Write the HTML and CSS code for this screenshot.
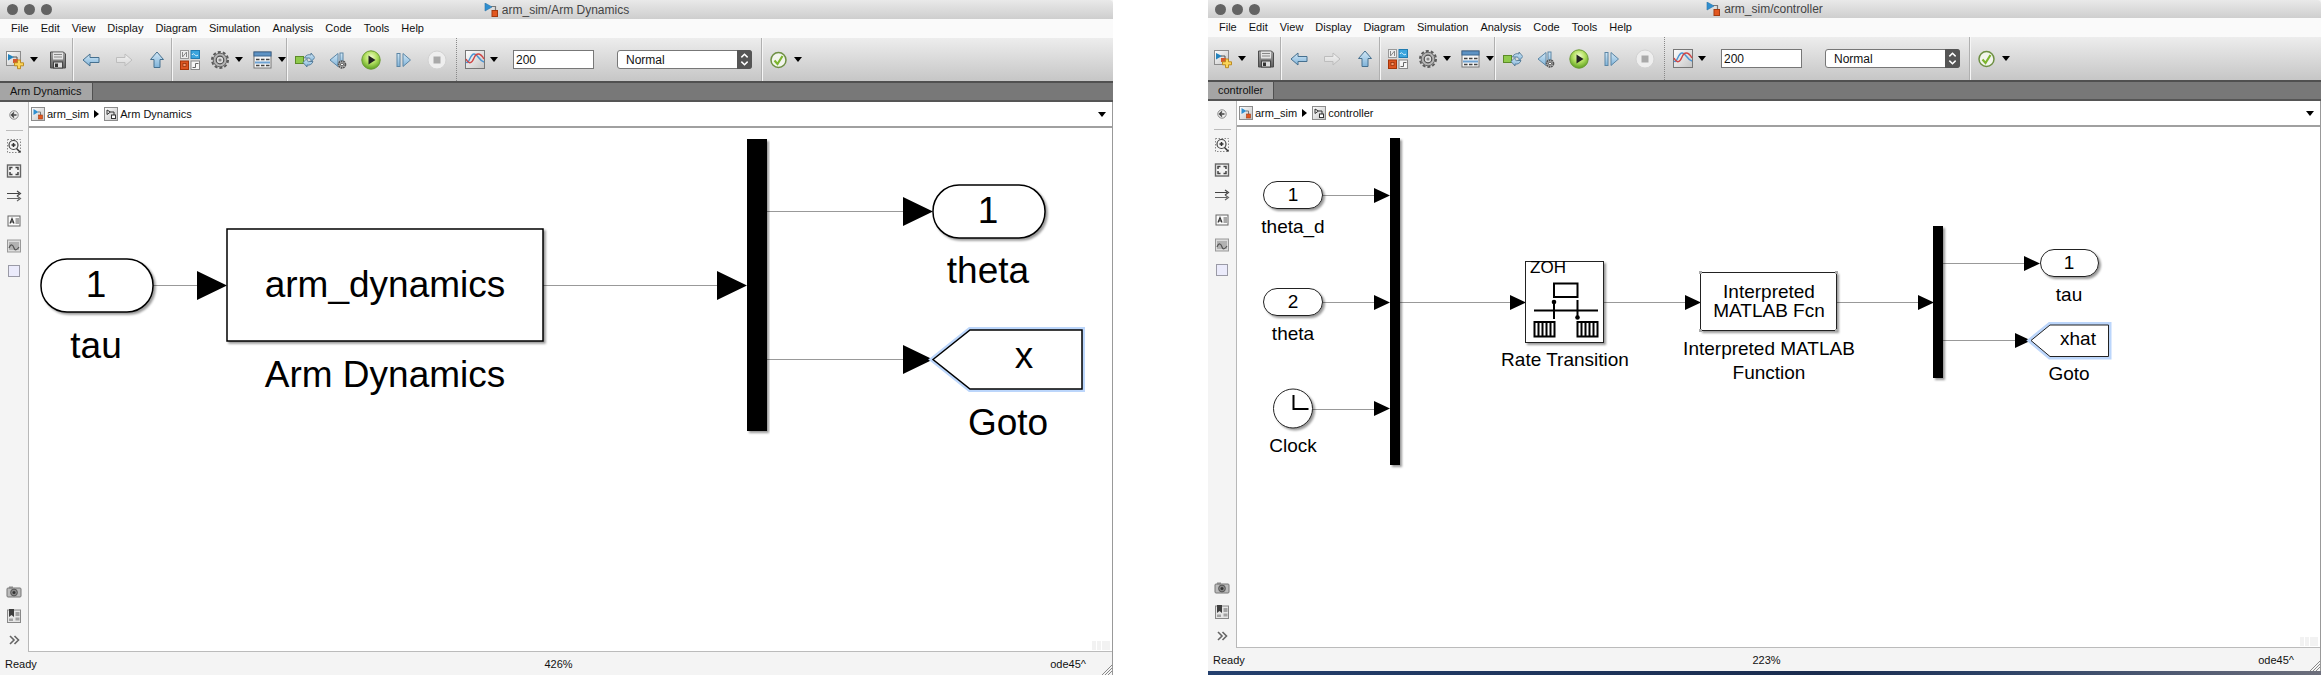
FILE: index.html
```html
<!DOCTYPE html>
<html lang="en">
<head>
<meta charset="utf-8">
<title>arm_sim</title>
<link rel="stylesheet" href="styles.css">
</head>
<body>
<svg class="defs" aria-hidden="true">
  <defs>
    <linearGradient id="blue" x1="0" y1="0" x2="0" y2="1"><stop offset="0" stop-color="#d3e8f6"/><stop offset="1" stop-color="#7fb3d9"/></linearGradient>
    <linearGradient id="pale" x1="0" y1="0" x2="0" y2="1"><stop offset="0" stop-color="#f4f4f4"/><stop offset="1" stop-color="#d6d6d6"/></linearGradient>
    <linearGradient id="grey" x1="0" y1="0" x2="0" y2="1"><stop offset="0" stop-color="#a8a8a8"/><stop offset="1" stop-color="#5e5e5e"/></linearGradient>
    <linearGradient id="tile" x1="0" y1="0" x2="1" y2="1"><stop offset="0" stop-color="#fff"/><stop offset="1" stop-color="#c4c4c4"/></linearGradient>
    <radialGradient id="green" cx=".5" cy=".35" r=".65"><stop offset="0" stop-color="#f4ffd0"/><stop offset=".5" stop-color="#b3e061"/><stop offset="1" stop-color="#5da020"/></radialGradient>
    <filter id="shadow" x="-10%" y="-10%" width="125%" height="130%"><feDropShadow dx="2" dy="2" stdDeviation="1" flood-color="#000" flood-opacity=".4"/></filter>
  </defs>
  <symbol id="i-model" viewBox="0 0 14 14"><path d="M7 3.500h4.500V8" fill="none" stroke="#777" stroke-width="1.200"/><path d="M1 0l7 4-7 4z" fill="#2f8fd0" stroke="#2a74a8" stroke-width=".6"/><rect x="8" y="7.500" width="5.500" height="6" fill="#e2571f" stroke="#a33a10"/></symbol>
  <symbol id="i-root" viewBox="0 0 14 14"><rect x=".5" y=".5" width="13" height="13" fill="url(#tile)" stroke="#8c8c8c"/><path d="M2.500 2l5 3-5 3z" fill="#2f8fd0"/><path d="M7 5h2.500v3" fill="none" stroke="#777"/><rect x="7.500" y="8" width="4" height="4" fill="#e2571f" stroke="#a33a10" stroke-width=".6"/></symbol>
  <symbol id="i-sub" viewBox="0 0 14 14"><rect x=".5" y=".5" width="13" height="13" fill="url(#tile)" stroke="#8c8c8c"/><path d="M3 3l3.500 2L3 7.500zM6.500 5h3.500v3" fill="none" stroke="#333"/><rect x="7.500" y="8" width="4" height="3.500" fill="#fff" stroke="#333"/></symbol>
  <symbol id="i-new" viewBox="0 0 20 20"><rect x="1.500" y="1.500" width="14" height="14" fill="url(#tile)" stroke="#8c8c8c"/><path d="M3 4l6 3-6 3.500z" fill="#2583bd"/><path d="M8 7h4v4" fill="none" stroke="#555"/><rect x="8" y="9" width="5" height="4" fill="#d65a2c"/><path d="M12.500 10h3v2.800h3v3h-3v2.900h-3v-2.900h-3v-3h3z" fill="#fbd65a" stroke="#b98518" stroke-width=".9"/></symbol>
  <symbol id="i-save" viewBox="0 0 20 20"><path d="M2.500 2h13l2 2v14h-15z" fill="url(#grey)" stroke="#4c4c4c"/><rect x="5" y="2.500" width="10" height="7" fill="#e4e4e4"/><path d="M6 4.500h8M6 7h8" stroke="#888"/><rect x="5.500" y="12" width="9" height="6" fill="#ddd" stroke="#444"/><rect x="7" y="13.500" width="3" height="3.500" fill="#333"/></symbol>
  <symbol id="i-back" viewBox="0 0 20 20"><path d="M2 10l7-6v3.500h9v5H9V16z" fill="url(#blue)" stroke="#46708f" stroke-linejoin="round"/></symbol>
  <symbol id="i-fwd" viewBox="0 0 20 20"><path d="M18 10l-7-6v3.500H2.500v5H11V16z" fill="url(#pale)" stroke="#bdbdbd" stroke-linejoin="round"/></symbol>
  <symbol id="i-up" viewBox="0 0 20 20"><path d="M10 2l6.500 7.500H13V17.500H7V9.500H3.500z" fill="url(#blue)" stroke="#46708f" stroke-linejoin="round"/></symbol>
  <symbol id="i-lib" viewBox="0 0 20 20"><rect x=".5" y=".5" width="8" height="8" fill="#eee" stroke="#999"/><path d="M2.500 2v5l4-5v5" fill="none" stroke="#888"/><rect x="11" y=".5" width="8.500" height="8" fill="#3aa5de" stroke="#217bb0"/><path d="M12 5c2-4 3 3 6 0" fill="none" stroke="#d8f0fc"/><rect x=".5" y="11" width="8" height="8.500" fill="#dc5420" stroke="#a43508"/><rect x="3" y="13.500" width="3" height="3" fill="#f49a70" stroke="#8c2b05" stroke-width=".7"/><rect x="11" y="11" width="8.500" height="8.500" fill="#f6f6f6" stroke="#888"/><path d="M12.500 17.500h3v-4h3" fill="none" stroke="#666"/></symbol>
  <symbol id="i-gear" viewBox="0 0 20 20"><circle cx="10" cy="10" r="8" fill="none" stroke="#5a5a5a" stroke-width="2" stroke-dasharray="3 2.030"/><circle cx="10" cy="10" r="6.800" fill="#b4b4b4" stroke="#666"/><circle cx="10" cy="10" r="3.800" fill="#ddd" stroke="#4f4f4f" stroke-width="1.200"/><circle cx="10" cy="10" r="1.600" fill="#888"/></symbol>
  <symbol id="i-table" viewBox="0 0 20 20"><rect x="1" y="2" width="17" height="16" fill="#f4f4f4" stroke="#777"/><rect x="1" y="2" width="17" height="4" fill="#5e93c4" stroke="#3d6690"/><path d="M3 9.500h3.500m1.500 0h3.500m1.500 0h3.500M3 15.500h3.500m1.500 0h3.500m1.500 0h3.500" stroke="#444" stroke-width="1.500"/><path d="M2 12.500h15" stroke="#6ea2d2" stroke-width="2"/></symbol>
  <symbol id="i-build" viewBox="0 0 20 20"><rect x=".5" y="6.500" width="8" height="7" fill="#8fca4c" stroke="#5c8b28"/><path d="M9.500 8A5 5 0 0 1 16 5V3l3.800 4.500L16 12v-1.500A2.500 2.500 0 0 0 13 8z" fill="url(#blue)" stroke="#46708f" stroke-width=".8"/><path d="M18 11.500A5 5 0 0 1 12 15v2L8 12.500 12 8.500V10.500a2.500 2.500 0 0 0 3 1z" fill="url(#blue)" stroke="#46708f" stroke-width=".8"/></symbol>
  <symbol id="i-stepback" viewBox="0 0 20 20"><path d="M10 3.500v13L2 10z" fill="url(#blue)" stroke="#5c86a5"/><rect x="12" y="3" width="3" height="12" fill="url(#blue)" stroke="#5c86a5"/><circle cx="14" cy="14.500" r="3.400" fill="#ccc" stroke="#555" stroke-width="1.800" stroke-dasharray="1.800 .6"/><circle cx="14" cy="14.500" r="1.500" fill="#fff" stroke="#444"/></symbol>
  <symbol id="i-play" viewBox="0 0 20 20"><circle cx="10" cy="10" r="9.200" fill="url(#green)" stroke="#6b9c34"/><path d="M7.500 5.500v9l7-4.500z" fill="#222"/></symbol>
  <symbol id="i-step" viewBox="0 0 20 20"><rect x="3" y="3.500" width="3" height="13" fill="url(#blue)" stroke="#5c86a5"/><path d="M9 3.500v13L16.500 10z" fill="url(#blue)" stroke="#5c86a5"/></symbol>
  <symbol id="i-stop" viewBox="0 0 20 20"><circle cx="10" cy="10" r="9" fill="#eee" stroke="#d2d2d2"/><rect x="6.500" y="6.500" width="7" height="7" fill="#a9a9a9"/></symbol>
  <symbol id="i-scope" viewBox="0 0 20 20"><rect x=".5" y=".5" width="19" height="18" fill="url(#tile)" stroke="#777"/><path d="M1 12C4 15 5 4 9 4s5 7 10 8" fill="none" stroke="#4a94d4" stroke-width="1.400"/><path d="M1 9c3 6 6 4 8-1s6-6 10 1" fill="none" stroke="#cf4545" stroke-width="1.400"/></symbol>
  <symbol id="i-check" viewBox="0 0 20 20"><circle cx="9.500" cy="10" r="7.500" fill="#f2f5ec" stroke="#6d8f42" stroke-width="1.500"/><path d="M5.500 10.500l3 3.500 5-8" fill="none" stroke="#7cb52e" stroke-width="2.200"/></symbol>
  <symbol id="i-down" viewBox="0 0 8 5"><path d="M0 0h8L4 5z"/></symbol>
  <symbol id="i-collapse" viewBox="0 0 16 16"><circle cx="8" cy="8" r="4.200" fill="#eee" stroke="#8a8a8a"/><path d="M10.500 8H6M8 5.500L5.500 8 8 10.500" fill="none" stroke="#444" stroke-width="1.300"/></symbol>
  <symbol id="i-zoom" viewBox="0 0 16 16"><path d="M1.500 1.500h13v13h-13z" fill="none" stroke="#888" stroke-dasharray="1.500 1.500"/><circle cx="7.500" cy="7" r="4.500" fill="#f4f4f4" stroke="#444" stroke-width="1.200"/><path d="M5.500 7h4M7.500 5v4M10.500 10.500l4 4" stroke="#333" stroke-width="1.500"/></symbol>
  <symbol id="i-fit" viewBox="0 0 16 16"><rect x="1.500" y="2" width="13" height="12" fill="#f3f3f3" stroke="#666" stroke-width="1.400"/><path d="M4 7V4.500h2.500M9.500 4.500H12V7M12 9v2.500H9.500M6.500 11.500H4V9" fill="none" stroke="#444" stroke-width="1.500"/></symbol>
  <symbol id="i-arrows" viewBox="0 0 16 16"><path d="M1 5.500h12M11 3l3.500 2.500L11 8" fill="none" stroke="#444" stroke-width="1.200"/><path d="M1 10.500h12M11 8l3.500 2.500L11 13" fill="none" stroke="#666" stroke-width="1.200"/></symbol>
  <symbol id="i-note" viewBox="0 0 16 16"><rect x="2" y="3" width="12" height="10" fill="#fafafa" stroke="#666"/><path d="M4 10.500l2-5 2 5M4.700 9h2.600" fill="none" stroke="#333" stroke-width="1.200"/><path d="M9.500 6H13M9.500 8H13M9.500 10H13" stroke="#555"/></symbol>
  <symbol id="i-image" viewBox="0 0 16 16"><rect x="1.500" y="2" width="13" height="12" fill="#ddd" stroke="#999"/><rect x="3" y="4" width="10" height="8" fill="#b2b2b2"/><path d="M3 10c2-5 4-3 5 0s3 2 5-1" fill="none" stroke="#555" stroke-width="1.200"/></symbol>
  <symbol id="i-area" viewBox="0 0 16 16"><rect x="2.500" y="2.500" width="11" height="11" fill="#ebebfb" stroke="#9a9aa6"/></symbol>
  <symbol id="i-camera" viewBox="0 0 16 16"><rect x="1" y="4" width="14" height="9" rx="1" fill="#bbb" stroke="#777"/><rect x="3" y="2.500" width="4" height="2" fill="#888"/><circle cx="8" cy="8.500" r="3.400" fill="#888" stroke="#555"/><circle cx="8" cy="8.500" r="1.500" fill="#333"/></symbol>
  <symbol id="i-book" viewBox="0 0 16 16"><rect x="1.500" y="2" width="13" height="12.500" fill="#e6e6e6" stroke="#888"/><path d="M9.500 4h4v4h-4zM9.500 9.500h4v3h-4zM3 10.500h4v2.500H3z" fill="#a3a3a3"/><path d="M3 1h5v8L5.500 7 3 9z" fill="#3e3e3e"/></symbol>
  <symbol id="i-more" viewBox="0 0 16 16"><path d="M4 4l4 4-4 4M8.500 4l4 4-4 4" fill="none" stroke="#666" stroke-width="1.600"/></symbol>
</svg>

<main class="desktop">
  <section class="window">
    <header class="title">
      <span class="lights"><i></i><i></i><i></i></span>
      <span class="title-text"><svg class="ico-s"><use href="#i-model"/></svg>arm_sim/Arm Dynamics</span>
    </header>
    <nav class="menu">
      <button>File</button><button>Edit</button><button>View</button><button>Display</button><button>Diagram</button><button>Simulation</button><button>Analysis</button><button>Code</button><button>Tools</button><button>Help</button>
    </nav>
    <div class="toolbar">
      <div class="group first">
        <button class="split" aria-label="New"><svg class="ico"><use href="#i-new"/></svg><svg class="down"><use href="#i-down"/></svg></button>
        <button aria-label="Save"><svg class="ico"><use href="#i-save"/></svg></button>
      </div>
      <div class="group wide">
        <button aria-label="Back"><svg class="ico"><use href="#i-back"/></svg></button>
        <button aria-label="Forward"><svg class="ico"><use href="#i-fwd"/></svg></button>
        <button aria-label="Up"><svg class="ico"><use href="#i-up"/></svg></button>
      </div>
      <div class="group tight">
        <button aria-label="Library"><svg class="ico"><use href="#i-lib"/></svg></button>
        <button class="split" aria-label="Settings"><svg class="ico"><use href="#i-gear"/></svg><svg class="down"><use href="#i-down"/></svg></button>
        <button class="split" aria-label="Explorer"><svg class="ico"><use href="#i-table"/></svg><svg class="down"><use href="#i-down"/></svg></button>
      </div>
      <div class="group wide run">
        <button aria-label="Build"><svg class="ico"><use href="#i-build"/></svg></button>
        <button aria-label="Step back"><svg class="ico"><use href="#i-stepback"/></svg></button>
        <button aria-label="Run"><svg class="ico"><use href="#i-play"/></svg></button>
        <button aria-label="Step forward"><svg class="ico"><use href="#i-step"/></svg></button>
        <button aria-label="Stop"><svg class="ico"><use href="#i-stop"/></svg></button>
      </div>
      <div class="group fields">
        <button class="split" aria-label="Scope"><svg class="ico"><use href="#i-scope"/></svg><svg class="down"><use href="#i-down"/></svg></button>
        <input class="time" type="text" value="200" aria-label="Stop time">
        <span class="picker"><select aria-label="Simulation mode"><option>Normal</option></select><svg class="stepper" viewBox="0 0 14 18"><path d="M4 7l3-3 3 3M4 11l3 3 3-3" fill="none" stroke="#fff" stroke-width="1.400"/></svg></span>
      </div>
      <div class="group last">
        <button class="split" aria-label="Check"><svg class="ico"><use href="#i-check"/></svg><svg class="down"><use href="#i-down"/></svg></button>
      </div>
    </div>
    <div class="tabs"><button class="tab">Arm Dynamics</button></div>
    <div class="body">
      <aside class="side">
        <button aria-label="Hide browser"><svg><use href="#i-collapse"/></svg></button>
        <hr>
        <button aria-label="Zoom"><svg><use href="#i-zoom"/></svg></button>
        <button aria-label="Fit"><svg><use href="#i-fit"/></svg></button>
        <button aria-label="Sample time"><svg><use href="#i-arrows"/></svg></button>
        <button aria-label="Annotation"><svg><use href="#i-note"/></svg></button>
        <button aria-label="Image"><svg><use href="#i-image"/></svg></button>
        <button aria-label="Area"><svg><use href="#i-area"/></svg></button>
        <span class="spacer"></span>
        <button class="low" aria-label="Screenshot"><svg><use href="#i-camera"/></svg></button>
        <button class="low" aria-label="Viewmarks"><svg><use href="#i-book"/></svg></button>
        <button class="low" aria-label="More"><svg><use href="#i-more"/></svg></button>
      </aside>
      <div class="editor">
        <div class="crumbs">
          <a href="#root"><svg class="ico-s"><use href="#i-root"/></svg>arm_sim</a>
          <svg class="next" viewBox="0 0 5 8"><path d="M0 0l5 4-5 4z"/></svg>
          <a href="#sub"><svg class="ico-s"><use href="#i-sub"/></svg>Arm Dynamics</a>
          <button class="history" aria-label="History"><svg class="down"><use href="#i-down"/></svg></button>
        </div>
        <div class="canvas">
          <svg class="diagram big" role="img" aria-label="Arm Dynamics diagram">
            <g transform="translate(-29 -128)">
              <g class="wire"><path d="M153 285.500H200M543 285.500H720M767 211.500H906M767 359.500H906"/></g>
              <path d="M197 271v29l30-14.500zM717 271v29l30-14.500zM903 197v29l30-14.500zM903 345v29l30-14.500z"/>
              <g class="block" filter="url(#shadow)">
                <rect x="41" y="259" width="112" height="53" rx="26"/>
                <rect x="227" y="229" width="316" height="112"/>
                <rect x="933" y="185" width="112" height="53" rx="26"/>
              </g>
              <rect x="747" y="139" width="20" height="292" filter="url(#shadow)"/>
              <path class="halo" d="M933 359.500L970 330h112v59H970z"/>
              <path class="block" d="M933 359.500L970 330h112v59H970z"/>
              <text x="96" y="297">1</text><text x="96" y="358">tau</text>
              <text x="385" y="297">arm_dynamics</text><text x="385" y="387">Arm Dynamics</text>
              <text x="988" y="223">1</text><text x="988" y="283">theta</text>
              <text x="1024" y="368">x</text><text x="1008" y="435">Goto</text>
            </g>
          </svg>
          <span class="ghost"><i></i><i></i><i></i></span>
        </div>
      </div>
    </div>
    <footer class="status"><span>Ready</span><span>426%</span><span class="solver">ode45^</span><svg class="grip" viewBox="0 0 10 10"><path d="M0 10L10 0M3 10l7-7M6 10l4-4" stroke="#888"/></svg></footer>
  </section>

  <section class="window second">
    <header class="title">
      <span class="lights"><i></i><i></i><i></i></span>
      <span class="title-text"><svg class="ico-s"><use href="#i-model"/></svg>arm_sim/controller</span>
    </header>
    <nav class="menu">
      <button>File</button><button>Edit</button><button>View</button><button>Display</button><button>Diagram</button><button>Simulation</button><button>Analysis</button><button>Code</button><button>Tools</button><button>Help</button>
    </nav>
    <div class="toolbar">
      <div class="group first">
        <button class="split" aria-label="New"><svg class="ico"><use href="#i-new"/></svg><svg class="down"><use href="#i-down"/></svg></button>
        <button aria-label="Save"><svg class="ico"><use href="#i-save"/></svg></button>
      </div>
      <div class="group wide">
        <button aria-label="Back"><svg class="ico"><use href="#i-back"/></svg></button>
        <button aria-label="Forward"><svg class="ico"><use href="#i-fwd"/></svg></button>
        <button aria-label="Up"><svg class="ico"><use href="#i-up"/></svg></button>
      </div>
      <div class="group tight">
        <button aria-label="Library"><svg class="ico"><use href="#i-lib"/></svg></button>
        <button class="split" aria-label="Settings"><svg class="ico"><use href="#i-gear"/></svg><svg class="down"><use href="#i-down"/></svg></button>
        <button class="split" aria-label="Explorer"><svg class="ico"><use href="#i-table"/></svg><svg class="down"><use href="#i-down"/></svg></button>
      </div>
      <div class="group wide run">
        <button aria-label="Build"><svg class="ico"><use href="#i-build"/></svg></button>
        <button aria-label="Step back"><svg class="ico"><use href="#i-stepback"/></svg></button>
        <button aria-label="Run"><svg class="ico"><use href="#i-play"/></svg></button>
        <button aria-label="Step forward"><svg class="ico"><use href="#i-step"/></svg></button>
        <button aria-label="Stop"><svg class="ico"><use href="#i-stop"/></svg></button>
      </div>
      <div class="group fields">
        <button class="split" aria-label="Scope"><svg class="ico"><use href="#i-scope"/></svg><svg class="down"><use href="#i-down"/></svg></button>
        <input class="time" type="text" value="200" aria-label="Stop time">
        <span class="picker"><select aria-label="Simulation mode"><option>Normal</option></select><svg class="stepper" viewBox="0 0 14 18"><path d="M4 7l3-3 3 3M4 11l3 3 3-3" fill="none" stroke="#fff" stroke-width="1.400"/></svg></span>
      </div>
      <div class="group last">
        <button class="split" aria-label="Check"><svg class="ico"><use href="#i-check"/></svg><svg class="down"><use href="#i-down"/></svg></button>
      </div>
    </div>
    <div class="tabs"><button class="tab">controller</button></div>
    <div class="body">
      <aside class="side">
        <button aria-label="Hide browser"><svg><use href="#i-collapse"/></svg></button>
        <hr>
        <button aria-label="Zoom"><svg><use href="#i-zoom"/></svg></button>
        <button aria-label="Fit"><svg><use href="#i-fit"/></svg></button>
        <button aria-label="Sample time"><svg><use href="#i-arrows"/></svg></button>
        <button aria-label="Annotation"><svg><use href="#i-note"/></svg></button>
        <button aria-label="Image"><svg><use href="#i-image"/></svg></button>
        <button aria-label="Area"><svg><use href="#i-area"/></svg></button>
        <span class="spacer"></span>
        <button class="low" aria-label="Screenshot"><svg><use href="#i-camera"/></svg></button>
        <button class="low" aria-label="Viewmarks"><svg><use href="#i-book"/></svg></button>
        <button class="low" aria-label="More"><svg><use href="#i-more"/></svg></button>
      </aside>
      <div class="editor">
        <div class="crumbs">
          <a href="#root"><svg class="ico-s"><use href="#i-root"/></svg>arm_sim</a>
          <svg class="next" viewBox="0 0 5 8"><path d="M0 0l5 4-5 4z"/></svg>
          <a href="#sub"><svg class="ico-s"><use href="#i-sub"/></svg>controller</a>
          <button class="history" aria-label="History"><svg class="down"><use href="#i-down"/></svg></button>
        </div>
        <div class="canvas">
          <svg class="diagram small" role="img" aria-label="controller diagram">
            <g transform="translate(-1237 -127)">
              <g class="wire"><path d="M1323 195.500h55M1323 302.500h55M1313 409.500h65M1400 302.500h115M1604 302.500h85M1837 302.500h85M1943 263.500h85M1943 340.500h75"/></g>
              <path d="M1374 188v15l16-7.500zM1374 295v15l16-7.500zM1374 401v15l16-7.500zM1510 295v15l16-7.500zM1685 295v15l16-7.500zM1918 295v15l16-7.500zM2024 256v15l16-7.500zM2015 333v15l16-7.500z"/>
              <g class="block" filter="url(#shadow)">
                <rect x="1263.500" y="181.500" width="59" height="27" rx="13.500"/>
                <rect x="1263.500" y="288.500" width="59" height="27" rx="13.500"/>
                <circle cx="1293" cy="408.500" r="19.500"/>
                <rect x="1525.500" y="261.500" width="78" height="81"/>
                <rect x="1700.500" y="272.500" width="136" height="58"/>
                <rect x="2040.500" y="249.500" width="58" height="27" rx="13.500"/>
              </g>
              <g filter="url(#shadow)"><rect x="1390" y="138" width="10" height="327"/><rect x="1933" y="226" width="10" height="152"/></g>
              <path class="corner" d="M1699 271h3v3h-3zM1835 271h3v3h-3zM1699 329h3v3h-3zM1835 329h3v3h-3z"/>
              <path class="halo" d="M2031 340.500l19-15.500h58.500v31.500H2050z"/>
              <path class="block" d="M2031 340.500l19-15.500h58.500v31.500H2050z"/>
              <path class="glyph" d="M1293.500 395v14h15M1554 283.500h23.500V297H1554zM1534 310.500h64M1554 302v17M1577.500 300v17"/>
              <path class="glyph" d="M1534.500 322h20v14.500h-20zM1577.500 322h20v14.500h-20zM1538.500 322v14M1542.500 322v14M1546.500 322v14M1550.500 322v14M1581.500 322v14M1585.500 322v14M1589.500 322v14M1593.500 322v14"/>
              <circle cx="1554" cy="302" r="2.300"/><circle cx="1577.500" cy="317.500" r="2.300"/>
              <text x="1293" y="201">1</text><text x="1293" y="233">theta_d</text>
              <text x="1293" y="308">2</text><text x="1293" y="340">theta</text>
              <text x="1293" y="452">Clock</text>
              <text class="zoh" x="1548" y="273">ZOH</text><text x="1565" y="366">Rate Transition</text>
              <text x="1769" y="298">Interpreted</text><text x="1769" y="317">MATLAB Fcn</text>
              <text x="1769" y="355">Interpreted MATLAB</text><text x="1769" y="379">Function</text>
              <text x="2069" y="269">1</text><text x="2069" y="301">tau</text>
              <text x="2078" y="345">xhat</text><text x="2069" y="380">Goto</text>
            </g>
          </svg>
          <span class="ghost"><i></i><i></i><i></i></span>
        </div>
      </div>
    </div>
    <footer class="status"><span>Ready</span><span>223%</span><span class="solver">ode45^</span><svg class="grip" viewBox="0 0 10 10"><path d="M0 10L10 0M3 10l7-7M6 10l4-4" stroke="#888"/></svg></footer>
    <div class="wallpaper"></div>
  </section>
</main>
</body>
</html>
```
FILE: styles.css
```css
* { box-sizing: border-box; }
body { margin: 0; background: #fff; color: #111; font: 11px/14px "Liberation Sans", Arial, sans-serif; }
button { display: flex; align-items: center; margin: 0; padding: 0; border: 0; background: none; color: inherit; font: inherit; }
a { color: inherit; text-decoration: none; }
svg { display: block; flex: none; }
.defs { position: absolute; width: 0; height: 0; }

.desktop { display: flex; gap: 95px; min-height: 100vh; }
.window { flex: 1; min-width: 0; display: flex; flex-direction: column; background: #f4f4f4; }

.title { position: relative; display: flex; justify-content: center; align-items: center; height: 19px; background: linear-gradient(#e9e9e9, #cecece); color: #444; font-size: 12px; border-radius: 0 4px 0 0; }
.second .title { height: 18px; }
.lights { position: absolute; left: 7px; display: flex; gap: 6px; }
.lights i { width: 11px; height: 11px; border-radius: 50%; background: #636363; }
.title-text { display: flex; align-items: center; gap: 4px; }
.ico-s { width: 14px; height: 14px; }

.menu { display: flex; align-items: center; gap: 12px; height: 19px; padding: 0 0 2px 11px; background: #fafafa; }

.toolbar { display: flex; height: 43px; background: linear-gradient(#ededed, #c6c6c6); }
.group { display: flex; align-items: center; padding: 0 5px 0 7px; border-right: 1px solid #f6f6f6; box-shadow: inset -1px 0 #b0b0b0; }
.first { gap: 10px; padding-left: 5px; }
.wide { gap: 13px; }
.tight { gap: 10px; padding-right: 1px; }
.run { padding-right: 9px; border-right: 1px dotted #888; box-shadow: none; }
.fields { padding-left: 8px; padding-right: 10px; }
.last { padding-left: 6px; border: 0; box-shadow: none; }
.split { gap: 5px; }
.ico { width: 20px; height: 20px; }
.down { width: 8px; height: 5px; }
.time { width: 81px; height: 19px; margin: 0 23px 0 15px; padding: 0 2px; border: 1px solid #777; border-radius: 0; background: #fff; color: #111; font: inherit; font-size: 12px; }
.picker { position: relative; display: flex; }
.picker select { width: 135px; height: 19px; padding: 0 8px; appearance: none; border: 1px solid #777; border-radius: 3px; background: #fff; color: #111; font: inherit; font-size: 12px; }
.stepper { position: absolute; right: 0; top: 0; width: 15px; height: 19px; background: #555; border-radius: 0 3px 3px 0; pointer-events: none; }

.tabs { display: flex; height: 21px; border-top: 2px solid #505050; border-bottom: 2px solid #555; background: #787878; }
.tab { padding: 0 10px 2px; background: #a5a5a5; border-right: 1px solid #505050; }

.body { flex: 1; display: flex; min-height: 0; border-right: 1px solid #999; }
.side { display: flex; flex-direction: column; align-items: center; width: 28px; }
.side button { height: 25px; }
.side .low { height: 24px; }
.side svg { width: 16px; height: 16px; }
.side hr { width: 17px; height: 1px; margin: 3px 0 2px; border: 0; background: #bbb; }
.spacer { flex: 1; }

.editor { flex: 1; min-width: 0; display: flex; flex-direction: column; border-left: 1px solid #b8b8b8; border-bottom: 1px solid #bbb; background: #fff; }
.crumbs { display: flex; align-items: center; gap: 5px; height: 26px; padding: 0 6px 0 2px; border-bottom: 2px solid #a0a0a0; }
.crumbs a { display: flex; align-items: center; gap: 2px; }
.next { width: 5px; height: 8px; }
.history { margin-left: auto; }
.canvas { position: relative; flex: 1; min-height: 0; }
.diagram { width: 100%; height: 100%; }
.ghost { position: absolute; right: 2px; bottom: 1px; display: flex; gap: 1px; }
.ghost i { width: 4px; height: 9px; background: #f2f2f2; }
.ghost i:last-child { width: 8px; }

.diagram text { text-anchor: middle; fill: #000; }
.big text { font-size: 37px; }
.small text { font-size: 19px; }
.small .zoh { font-size: 17px; }
.wire { stroke: #999; stroke-width: 1; fill: none; }
.block { fill: #fff; stroke: #000; stroke-width: 1.5; }
.small .block { stroke: #222; stroke-width: 1; }
.halo { fill: none; stroke: #bcd6fb; stroke-width: 6; }
.corner { fill: #aaa; }
.glyph { fill: none; stroke: #000; stroke-width: 2; }

.status { position: relative; display: grid; grid-template-columns: 1fr auto 1fr; align-items: center; height: 23px; padding-left: 5px; border-right: 1px solid #999; }
.solver { padding-right: 26px; text-align: right; }
.grip { position: absolute; right: 0; bottom: 0; width: 10px; height: 10px; }
.wallpaper { height: 4px; background: linear-gradient(90deg, #24406e, #1a2c4e 55%, #2b4166 70%, #6d6f7c); }
```
